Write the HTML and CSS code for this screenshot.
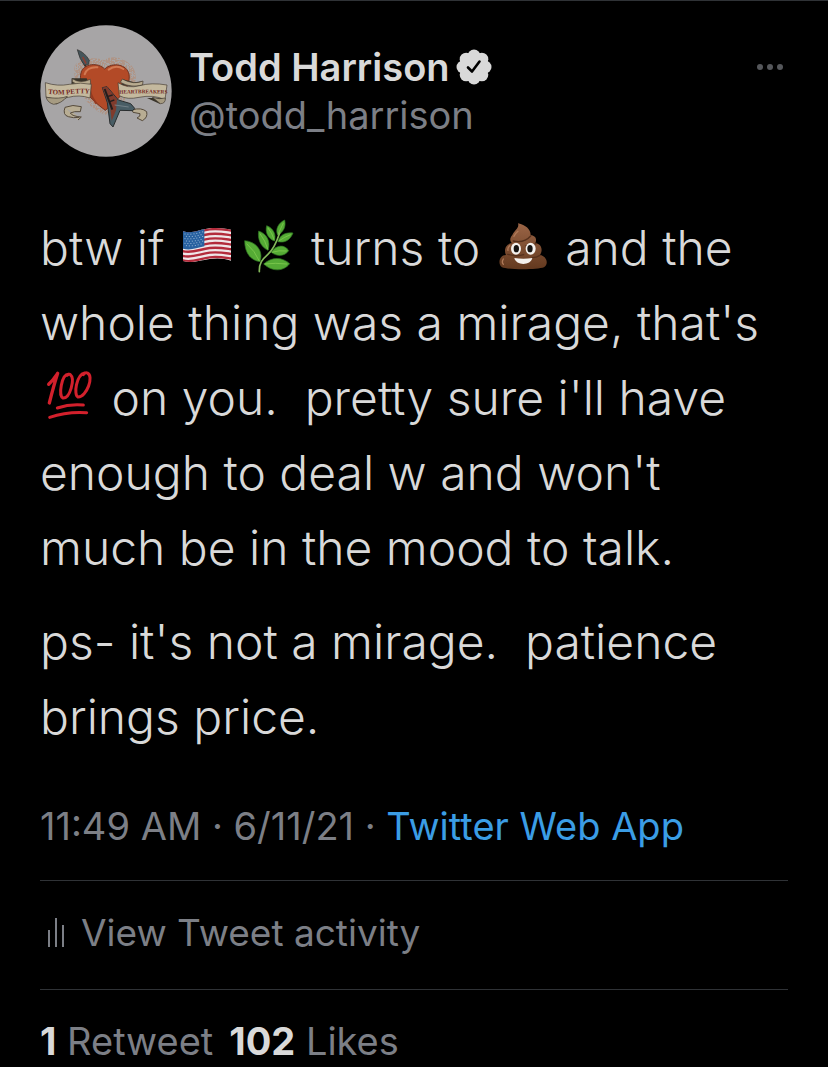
FILE: index.html
```
<!DOCTYPE html>
<html lang="en">
<head>
    <meta charset="UTF-8">
    <meta name="viewport" content="width=device-width, initial-scale=1.0">
    <title>Todd Harrison on Twitter</title>
    <link rel="stylesheet" href="styles.css">
</head>
<body>
    <article class="tweet">
        <header class="tweet-header">
            <svg class="avatar" viewBox="30 30 396 396" role="img" aria-label="Tom Petty and the Heartbreakers logo">
                <defs>
                    <path id="leftBanner" d="M54 236 Q90 241 122 237 T184 237"/>
                    <path id="rightBanner" d="M268 236 Q330 234 412 236"/>
                    <filter id="speckle" x="0" y="0" width="1" height="1">
                        <feTurbulence type="fractalNoise" baseFrequency="0.2" numOctaves="2" seed="4"/>
                        <feColorMatrix values="0 0 0 0 .45  0 0 0 0 .27  0 0 0 0 .19  0 0 0 14 -6"/>
                        <feComposite in2="SourceGraphic" operator="in"/>
                    </filter>
                </defs>
                <circle cx="228" cy="228" r="197" fill="#a7a5a6"/>
                <path d="M135 150 Q160 120 222 134 Q265 114 305 152 Q330 185 305 225 Q275 280 225 300 Q175 280 155 235 Q125 190 135 150Z" fill="#000" filter="url(#speckle)" opacity=".7"/>
                <path d="M160 140 l14 28" stroke="#4b3025" stroke-width="6"/>
                <path d="M142 104 Q165 113 178 136 L176 148 L163 151 Q148 132 142 104Z" fill="#46555a" stroke="#2c2a29" stroke-width="2"/>
                <path d="M158 126 l10 20" stroke="#8d3e30" stroke-width="5"/>
                <path d="M226 286 C180 252 143 211 153 174 C160 144 205 142 224 162 C248 140 291 148 297 178 C304 219 259 257 226 286Z" fill="#b34a27" stroke="#70311f" stroke-width="3"/>
                <path d="M164 178 Q172 155 202 157 M236 164 Q258 148 280 162" fill="none" stroke="#d27952" stroke-width="6" stroke-linecap="round"/>
                <path d="M181 212 Q176 234 199 266" fill="none" stroke="#943a20" stroke-width="6"/>
                <!-- left ribbon -->
                <path d="M125 190 L170 190 L178 207 L124 218Z M58 244 L112 246 L80 268 Q58 267 52 252Z" fill="#383329"/>
                <path d="M127 191 Q151 207 181 193 L182 207 Q148 217 127 200Z" fill="#b8ab8f" stroke="#443b30" stroke-width="2"/>
                <path d="M46 203 Q83 215 118 208 T184 208 L180 249 Q147 238 115 247 T48 246Z" fill="#c4b99e" stroke="#443b30" stroke-width="2"/>
                <path d="M48 247 Q90 253 112 244 Q94 266 71 268 Q54 264 48 247Z" fill="#a69b82" stroke="#443b30" stroke-width="2"/>
                <path d="M105 277 Q128 267 154 275 L151 290 Q132 288 121 294 Q126 304 154 306 L144 315 M105 277 Q97 300 115 305 Q130 310 148 307" fill="#b8ad93" stroke="#554a3b" stroke-width="3"/>
                <!-- right ribbon -->
                <path d="M277 193 L313 202 L338 199 L337 215 L274 211Z M370 249 L396 250 L390 267 L351 249Z" fill="#383329"/>
                <path d="M277 192 Q312 211 339 198 L338 210 Q303 220 271 202Z" fill="#b8ab8f" stroke="#443b30" stroke-width="2"/>
                <path d="M264 203 Q294 222 329 212 T411 210 L405 254 Q370 238 327 247 Q292 255 268 242Z" fill="#c4b99e" stroke="#443b30" stroke-width="2"/>
                <path d="M367 247 Q390 254 406 249 Q407 266 391 266Z" fill="#a69b82" stroke="#443b30" stroke-width="2"/>
                <path d="M306 285 Q334 276 350 290 Q354 308 337 317 L321 309 Q333 304 330 296 L309 292Z" fill="#b8ad93" stroke="#554a3b" stroke-width="3"/>
                <!-- guitar -->
                <path d="M217 218 L231 215 L265 255 L302 266 L314 280 L308 287 L270 286 L249 336 L240 326 L232 263Z" fill="#485d65" stroke="#292d2e" stroke-width="3"/>
                <path d="M217 218 L231 215 L261 253 L258 286 L245 317 L240 272Z" fill="#803b2c"/>
                <path d="M224 222 L247 284" stroke="#221d1c" stroke-width="6"/>
                <path d="M234 244 L248 240 M239 260 L253 255" stroke="#221d1c" stroke-width="4"/>
                <path d="M254 270 L296 276" stroke="#728087" stroke-width="3"/>
                <text class="banner-text"><textPath href="#leftBanner">TOM PETTY</textPath></text>
                <text class="banner-text banner-small"><textPath href="#rightBanner">HEARTBREAKERS</textPath></text>
            </svg>

            <div class="author">
                <a href="#" class="author-name">Todd Harrison
                    <svg class="verified" viewBox="0 0 36 36" role="img" aria-label="Verified account">
                        <g fill="#d9d9d9">
                            <circle cx="18" cy="18" r="13"/>
                            <circle cx="18" cy="7" r="6.5"/>
                            <circle cx="25.8" cy="10.2" r="6.5"/>
                            <circle cx="29" cy="18" r="6.5"/>
                            <circle cx="25.8" cy="25.8" r="6.5"/>
                            <circle cx="18" cy="29" r="6.5"/>
                            <circle cx="10.2" cy="25.8" r="6.5"/>
                            <circle cx="7" cy="18" r="6.5"/>
                            <circle cx="10.2" cy="10.2" r="6.5"/>
                        </g>
                        <path d="M12 18.5 L16 22.5 L23.5 12.5" fill="none" stroke="#000" stroke-width="2.6" stroke-linecap="round" stroke-linejoin="round"/>
                    </svg>
                </a>
                <a href="#" class="author-handle">@todd_harrison</a>
            </div>

            <button type="button" class="more-button" aria-label="More">
                <svg viewBox="0 0 28 8"><circle cx="4" cy="4" r="3"/><circle cx="14" cy="4" r="3"/><circle cx="24" cy="4" r="3"/></svg>
            </button>
        </header>

        <div class="tweet-text">
            <p>btw if <svg class="emoji" viewBox="30 36 150 150" role="img" aria-label="United States flag">
                <defs>
                    <clipPath id="flagShape"><path d="M33 67 C61 76 83 61 113 58 C140 55 158 59 177 62 V155 C158 149 139 146 113 150 C84 154 60 164 33 156Z"/></clipPath>
                    <path id="stripe" d="M30 70 C61 79 83 64 113 61 C140 58 158 62 180 65" fill="none" stroke="#b32b3b" stroke-width="7.2"/>
                </defs>
                <g clip-path="url(#flagShape)">
                    <rect x="30" y="50" width="150" height="115" fill="#efe6e8"/>
                    <use href="#stripe"/><use href="#stripe" y="14"/><use href="#stripe" y="28"/><use href="#stripe" y="42"/><use href="#stripe" y="56"/><use href="#stripe" y="70"/><use href="#stripe" y="84"/>
                    <path d="M30 60 H97 V112 C72 117 54 126 30 118Z" fill="#2861a0"/>
                    <g fill="none" stroke="#b9d0e5" stroke-width="3" stroke-linecap="round" stroke-dasharray="0 9">
                        <path d="M39 75 Q64 78 94 68"/><path d="M43 82 Q66 85 94 75"/><path d="M39 89 Q64 92 94 82"/><path d="M43 96 Q66 99 94 89"/><path d="M39 103 Q64 106 94 96"/><path d="M43 110 Q66 113 94 103"/>
                    </g>
                </g>
            </svg> <svg class="emoji emoji-leaf" viewBox="216 36 150 150" role="img" aria-label="Herb">
                <g fill="#55ab35" stroke="#2e7722" stroke-width="2">
                    <path d="M218 95 C249 97 276 124 264 158 C233 154 218 128 218 95Z"/>
                    <path d="M260 66 C284 74 297 97 288 124 C266 114 256 90 260 66Z"/>
                    <path d="M284 50 C304 57 314 78 307 96 C287 88 279 69 284 50Z"/>
                    <path d="M338 33 C343 53 334 70 317 78 C309 61 319 42 338 33Z"/>
                    <path d="M363 72 C355 93 338 103 318 98 C323 78 341 69 363 72Z"/>
                    <path d="M350 125 C339 142 315 144 298 130 C312 107 338 105 350 125Z"/>
                    <path d="M353 164 C335 188 301 189 275 165 C302 141 332 145 353 164Z"/>
                </g>
                <g fill="none" stroke="#89d254" stroke-width="2">
                    <path d="M224 104 Q249 126 262 156 M264 74 Q280 95 288 122 M288 57 Q301 73 307 94 M334 42 L318 76 M356 77 Q337 84 320 96 M344 126 Q320 123 300 130 M345 165 Q311 161 277 165"/>
                </g>
                <path d="M262 188 C261 162 271 151 287 137 C306 120 315 96 323 72" fill="none" stroke="#84b95b" stroke-width="5" stroke-linecap="round"/>
            </svg> turns to <svg class="emoji" viewBox="27 24 150 150" role="img" aria-label="Pile of poo">
                <defs><linearGradient id="poo" x2="0" y2="1"><stop stop-color="#9b6546"/><stop offset="1" stop-color="#63391f"/></linearGradient></defs>
                <path d="M87 31 C92 45 76 52 70 66 C59 78 65 89 70 91 C49 91 44 113 51 126 C31 126 25 153 39 163 C58 171 145 171 165 163 C181 151 172 129 153 126 C163 111 157 92 139 91 C146 73 135 68 125 66 C125 49 110 36 87 31Z" fill="url(#poo)"/>
                <path d="M73 84 Q106 91 125 69 M56 124 Q83 132 104 125 M143 91 Q129 99 111 98 M153 127 Q142 134 130 134" fill="none" stroke="#55301c" stroke-width="4" stroke-linecap="round"/>
                <path d="M87 55 Q78 62 75 70 M62 98 Q55 104 57 112 M43 138 Q37 148 43 154" fill="none" stroke="#b07a59" stroke-width="4" stroke-linecap="round"/>
                <g fill="#f4f1ee"><ellipse cx="81" cy="107" rx="15" ry="18"/><ellipse cx="125" cy="107" rx="15" ry="18"/><path d="M76 135 Q103 140 130 135 C126 158 81 159 76 135Z"/></g>
                <g fill="#171412"><ellipse cx="82" cy="107" rx="8" ry="11"/><ellipse cx="123" cy="107" rx="8" ry="11"/></g>
            </svg> and the whole thing was a mirage, that's <svg class="emoji" viewBox="30 36 150 150" role="img" aria-label="100">
                <g fill="none" stroke="#d3202c" stroke-linecap="round" stroke-linejoin="round">
                    <path d="M44 76 Q57 64 71 43 Q60 77 46 132" stroke-width="10"/>
                    <path d="M103 46 C83 46 72 111 87 117 C108 119 124 59 109 47 Q106 43 99 49" stroke-width="9"/>
                    <path d="M152 42 C127 47 118 108 132 114 C158 115 181 50 160 42 Q154 39 148 47" stroke-width="9"/>
                    <path d="M70 147 Q108 134 148 138" stroke-width="9"/>
                    <path d="M47 175 Q99 157 158 161" stroke-width="9"/>
                </g>
            </svg> on you.  pretty sure i'll have enough to deal w and won't much be in the mood to talk.</p>
            <p>ps- it's not a mirage.  patience brings price.</p>
        </div>

        <div class="tweet-meta">
            <time datetime="2021-06-11T11:49">11:49 AM · 6/11/21</time> · <a href="#">Twitter Web App</a>
        </div>

        <a href="#" class="tweet-activity">
            <svg class="activity-icon" viewBox="0 0 20 32" aria-hidden="true"><path d="M3 13 V30 M10 1 V30 M17 8 V30"/></svg>
            View Tweet activity
        </a>

        <footer class="tweet-stats">
            <a href="#"><strong>1</strong> Retweet</a>
            <a href="#"><strong>102</strong> Likes</a>
        </footer>
    </article>
</body>
</html>
```
FILE: styles.css
```
:root {
    --background-color: #000;
    --text-color: #d9d9d9;
    --muted-color: #7c7f86;
    --link-color: #3b9de5;
    --border-color: #2f3236;
}

* {
    margin: 0;
    padding: 0;
    box-sizing: border-box;
}

body {
    background-color: var(--background-color);
    color: var(--text-color);
    font-family: Inter, "Liberation Sans", sans-serif;
    font-size: 38px;
    line-height: 48px;
}

a {
    color: inherit;
    text-decoration: none;
}

.tweet {
    padding: 24px 40px 0;
    border-top: 1px solid var(--border-color);
}

.tweet-header {
    display: flex;
    align-items: center;
    gap: 17px;
}

.avatar {
    flex: none;
    width: 132px;
    height: 132px;
}

.banner-text {
    font-family: "Liberation Serif", serif;
    font-size: 21px;
    font-weight: bold;
    fill: #74281e;
}

.banner-small {
    font-size: 16px;
}

.author {
    display: flex;
    flex-direction: column;
    flex: 1;
}

.author-name {
    display: flex;
    align-items: center;
    gap: 6px;
    font-weight: 600;
}

.verified {
    width: 36px;
    height: 36px;
}

.author-handle {
    color: var(--muted-color);
}

.more-button {
    align-self: flex-start;
    display: flex;
    align-items: center;
    height: 48px;
    margin-top: 18px;
    padding: 0 4px;
    background: none;
    border: none;
    cursor: pointer;
}

.more-button svg {
    width: 28px;
    height: 8px;
    fill: #55575b;
}

.tweet-text {
    display: flex;
    flex-direction: column;
    gap: 19px;
    margin: 53px 0 48px;
    font-size: 48px;
    font-weight: 300;
    line-height: 75px;
    white-space: pre-wrap;
}

.emoji {
    width: 50px;
    height: 50px;
    margin: 0 4px;
    vertical-align: -6px;
    overflow: visible;
}

.emoji-leaf {
    margin-left: -6px;
}

.tweet-meta {
    padding-bottom: 30px;
    color: var(--muted-color);
}

.tweet-meta a {
    color: var(--link-color);
}

.tweet-activity {
    display: flex;
    align-items: center;
    gap: 15px;
    padding: 28px 0 32px 6px;
    border: solid var(--border-color);
    border-width: 1px 0;
    color: var(--muted-color);
    font-size: 37px;
}

.activity-icon {
    width: 20px;
    height: 32px;
    fill: none;
    stroke: var(--muted-color);
    stroke-width: 2;
}

.tweet-stats {
    display: flex;
    gap: 16px;
    padding-top: 27px;
    color: var(--muted-color);
}

.tweet-stats strong {
    color: var(--text-color);
    font-weight: 700;
}
```
